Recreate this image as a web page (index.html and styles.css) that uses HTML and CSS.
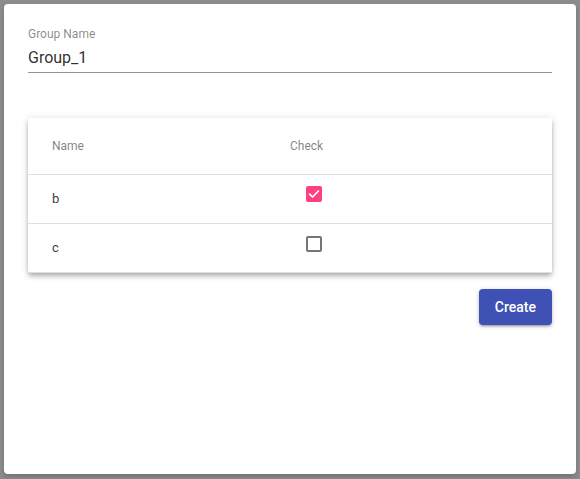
FILE: index.html
```html
<!DOCTYPE html>
<html lang="en">
<head>
<meta charset="utf-8">
<title>Create Group</title>
<link rel="stylesheet" href="styles.css">
</head>
<body>
<div class="dialog">
  <div class="field">
    <label class="field-label">Group Name</label>
    <div class="field-input">Group_1</div>
  </div>
  <div class="table">
    <div class="row head">
      <div class="cell">Name</div>
      <div class="cell">Check</div>
    </div>
    <div class="row body">
      <div class="cell">b</div>
      <div class="cell"><span class="box checked box-1"><svg viewBox="0 0 16 16" width="16" height="16"><polyline points="3.6,8.2 6.6,11 12.4,5" fill="none" stroke="#fff" stroke-width="1.7" stroke-linecap="round" stroke-linejoin="round"/></svg></span></div>
    </div>
    <div class="row body">
      <div class="cell">c</div>
      <div class="cell"><span class="box box-2"></span></div>
    </div>
  </div>
  <div class="actions">
    <button class="btn">Create</button>
  </div>
</div>
</body>
</html>
```
FILE: styles.css
```css
html, body {
  margin: 0;
  padding: 0;
}
body {
  background: #8c8c8c;
  font-family: Roboto, "Liberation Sans", Arial, sans-serif;
  height: 479px;
  overflow: hidden;
}
.dialog {
  margin: 4px;
  height: 470px;
  box-sizing: border-box;
  background: #fff;
  border-radius: 4px;
  padding: 23px 24px 24px;
  box-shadow: 0 3px 5px rgba(0, 0, 0, 0.18);
}
.field {
  display: flex;
  flex-direction: column;
}
.field-label {
  font-size: 12px;
  line-height: 14px;
  color: rgba(0, 0, 0, 0.48);
}
.field-input {
  margin-top: 7px;
  font-size: 16px;
  line-height: 19px;
  color: rgba(0, 0, 0, 0.84);
  padding-bottom: 5px;
  border-bottom: 1px solid rgba(0, 0, 0, 0.42);
}
.table {
  margin-top: 45px;
  background: #fff;
  border-radius: 2px;
  box-shadow: 0 2px 4px -1px rgba(0, 0, 0, 0.2), 0 4px 5px 0 rgba(0, 0, 0, 0.14), 0 1px 10px 0 rgba(0, 0, 0, 0.12);
}
.row {
  display: grid;
  grid-template-columns: 238px 1fr;
  box-sizing: border-box;
  border-bottom: 1px solid #e0e0e0;
}
.row.head {
  height: 57px;
  font-size: 12px;
  color: rgba(0, 0, 0, 0.5);
}
.row.body {
  height: 49px;
  font-size: 13px;
  color: rgba(0, 0, 0, 0.8);
}
.row.body .cell:first-child {
  padding-bottom: 2px;
}
.cell {
  display: flex;
  align-items: center;
  padding-left: 24px;
}
.box {
  display: block;
  width: 16px;
  height: 16px;
  box-sizing: border-box;
  margin-left: 16px;
  border: 2px solid rgba(0, 0, 0, 0.54);
  border-radius: 2px;
}
.box-1 { margin-bottom: 10px; }
.box-2 { margin-bottom: 9px; }
.box.checked {
  background: #ff4081;
  border: none;
}
.box svg {
  display: block;
}
.actions {
  display: flex;
  justify-content: flex-end;
  margin-top: 16px;
}
.btn {
  height: 36px;
  min-width: 64px;
  padding: 0 16px;
  border: none;
  border-radius: 4px;
  background: #3f51b5;
  color: #fff;
  font-family: Roboto, "Liberation Sans", Arial, sans-serif;
  font-size: 14px;
  font-weight: 500;
  box-shadow: 0 1px 5px 0 rgba(0, 0, 0, 0.2), 0 2px 2px 0 rgba(0, 0, 0, 0.14), 0 3px 1px -2px rgba(0, 0, 0, 0.12);
}
```
